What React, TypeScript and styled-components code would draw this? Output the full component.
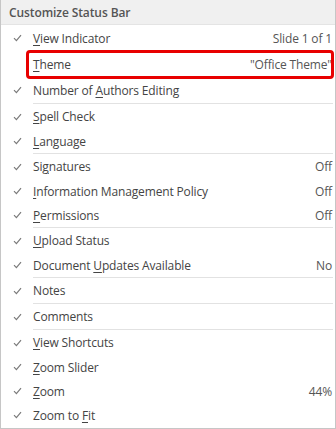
import React from "react";
import styled, { createGlobalStyle } from "styled-components";

const Global = createGlobalStyle`
  html, body { margin: 0; padding: 0; background: #ffffff; }
  body { font-family: "Open Sans", "Noto Sans", sans-serif; }
`;

const Panel = styled.div`
  width: 336px;
  height: 429px;
  box-sizing: border-box;
  border-left: 1px solid #c6c6c6;
  border-right: 1px solid #c6c6c6;
  border-bottom: 1px solid #c6c6c6;
  background: #ffffff;
  display: flex;
  flex-direction: column;
  overflow: hidden;
`;

const Header = styled.div`
  height: 25px;
  flex: none;
  background: #f0f0f0;
  border-bottom: 1px solid #e4e4e4;
  box-sizing: border-box;
  display: flex;
  align-items: center;
  padding-left: 8px;
  font-size: 12px;
  font-weight: 600;
  color: #555555;
  letter-spacing: -0.1px;
`;

const Row = styled.div<{ $h: number; $highlight?: boolean }>`
  position: relative;
  height: ${(p) => p.$h}px;
  flex: none;
  display: grid;
  grid-template-columns: 32px 1fr auto;
  align-items: center;
  padding-right: 3px;
  font-size: 12px;
  color: #444444;
  letter-spacing: -0.15px;
  ${(p) =>
    p.$highlight &&
    `
    &::after {
      content: "";
      position: absolute;
      left: 25px;
      right: 1px;
      top: -1px;
      bottom: -2px;
      border: 3px solid #e80000;
      border-radius: 4px;
      pointer-events: none;
    }
  `}
`;

const Check = styled.span`
  display: flex;
  justify-content: center;
  padding-left: 1px;
  color: #7a7a7a;
`;

const Label = styled.span`
  white-space: nowrap;
`;

const Value = styled.span`
  color: #555555;
  white-space: nowrap;
`;

const Sep = styled.div`
  height: 1px;
  flex: none;
  margin-left: 32px;
  margin-right: 2px;
  background: #e2e2e2;
`;

const Key = styled.span`
  text-decoration: underline;
  text-underline-offset: 2px;
  text-decoration-thickness: 1px;
`;

const CheckIcon = () => (
  <svg width="9" height="8" viewBox="0 0 9 8">
    <path d="M1 4.2 L3.4 6.6 L8 1.2" fill="none" stroke="#7a7a7a" strokeWidth="1.2" />
  </svg>
);

type Item = {
  pre?: string;
  key?: string;
  post?: string;
  value?: string;
  checked: boolean;
  h: number;
  highlight?: boolean;
};

const groups: Item[][] = [
  [
    { key: "V", post: "iew Indicator", value: "Slide 1 of 1", checked: true, h: 26 },
    { key: "T", post: "heme", value: "\"Office Theme\"", checked: false, h: 26, highlight: true },
    { pre: "Number of ", key: "A", post: "uthors Editing", checked: true, h: 26 },
  ],
  [
    { key: "S", post: "pell Check", checked: true, h: 25 },
    { key: "L", post: "anguage", checked: true, h: 24 },
  ],
  [
    { pre: "Si", key: "g", post: "natures", value: "Off", checked: true, h: 25 },
    { key: "I", post: "nformation Management Policy", value: "Off", checked: true, h: 24 },
    { key: "P", post: "ermissions", value: "Off", checked: true, h: 24 },
  ],
  [
    { key: "U", post: "pload Status", checked: true, h: 25 },
    { pre: "Document ", key: "U", post: "pdates Available", value: "No", checked: true, h: 24 },
  ],
  [{ pre: "Notes", checked: true, h: 25 }],
  [{ pre: "Comments", checked: true, h: 25 }],
  [
    { key: "V", post: "iew Shortcuts", checked: true, h: 25 },
    { key: "Z", post: "oom Slider", checked: true, h: 24 },
    { key: "Z", post: "oom", value: "44%", checked: true, h: 24 },
    { pre: "Zoom to ", key: "F", post: "it", checked: true, h: 24 },
  ],
];

export default function App() {
  return (
    <>
      <Global />
      <Panel>
        <Header>Customize Status Bar</Header>
        {groups.map((g, gi) => (
          <React.Fragment key={gi}>
            {gi > 0 && <Sep />}
            {g.map((it, i) => (
              <Row key={i} $h={it.h} $highlight={it.highlight}>
                <Check>{it.checked ? <CheckIcon /> : null}</Check>
                <Label>
                  {it.pre}
                  {it.key && <Key>{it.key}</Key>}
                  {it.post}
                </Label>
                <Value>{it.value}</Value>
              </Row>
            ))}
          </React.Fragment>
        ))}
      </Panel>
    </>
  );
}
